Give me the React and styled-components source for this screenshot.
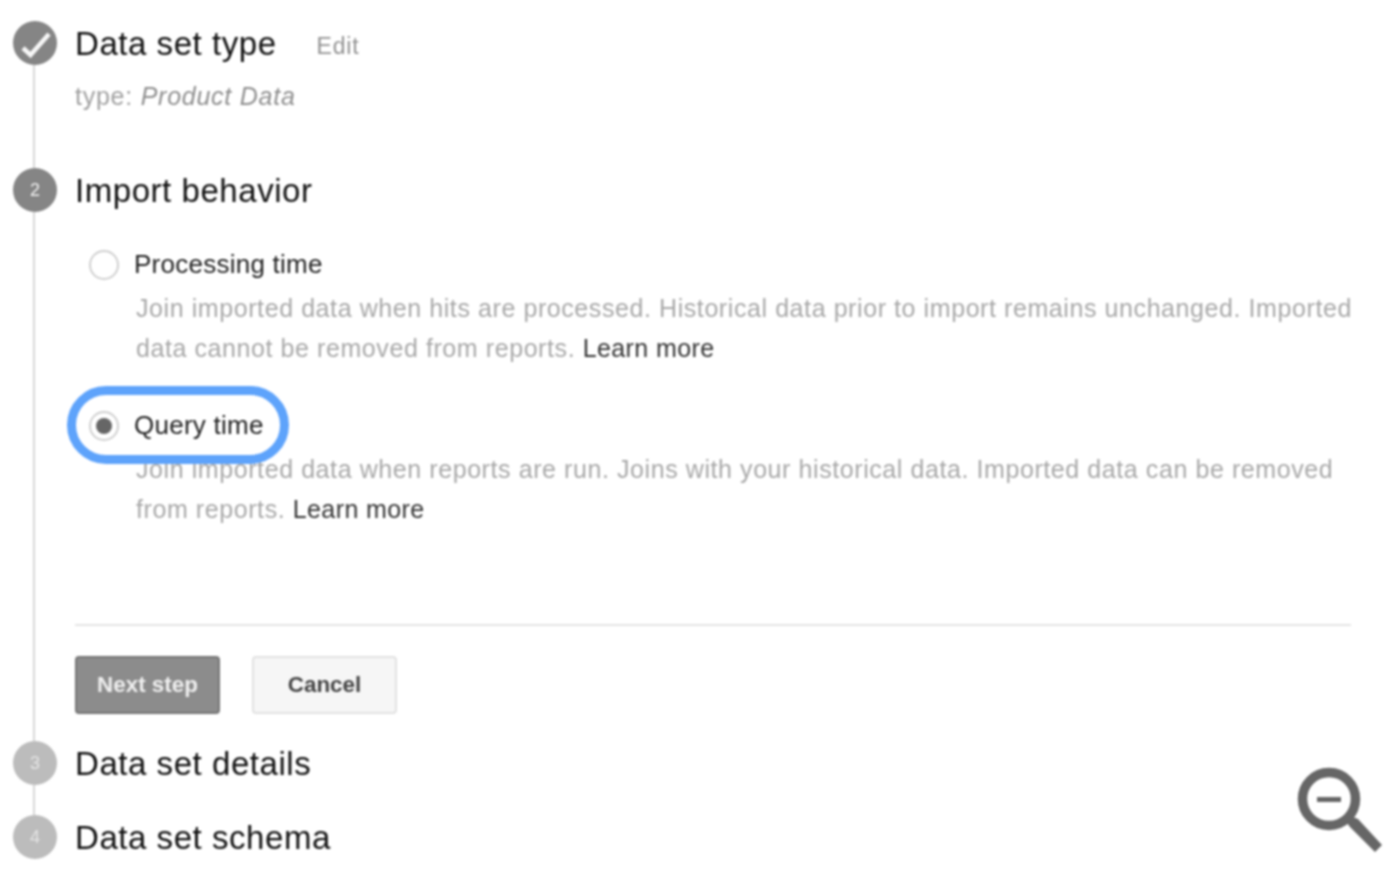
import React from 'react';
import styled, { createGlobalStyle } from 'styled-components';

const GlobalStyle = createGlobalStyle`
  html, body {
    margin: 0;
    background: #fff;
    font-family: "Liberation Sans", Arial, sans-serif;
  }
`;

const Page = styled.div`
  position: relative;
  width: 1392px;
  height: 874px;
  padding: 21px 41px 0 13px;
  box-sizing: border-box;
  overflow: hidden;
  filter: blur(0.8px);
`;

const Step = styled.section`
  display: flex;
  gap: 18px;
  min-height: ${p => p.$height}px;
`;

const Marker = styled.div`
  display: flex;
  flex-direction: column;
  align-items: center;
  width: 44px;
  flex: none;
`;

const Circle = styled.div`
  width: 44px;
  height: 44px;
  border-radius: 50%;
  flex: none;
  display: flex;
  align-items: center;
  justify-content: center;
  background: ${p => (p.$active ? '#858585' : '#bcbcbc')};
  color: ${p => (p.$active ? '#f2f2f2' : '#e4e4e4')};
  font-size: 18px;
`;

const Connector = styled.div`
  flex: 1;
  width: 2px;
  margin-right: 2px;
  background: #d8d8d8;
`;

const Body = styled.div`
  flex: 1;
  min-width: 0;
`;

const TitleRow = styled.div`
  display: flex;
  align-items: center;
  height: 44px;
`;

const Title = styled.h2`
  margin: 0;
  padding-top: 1px;
  font-size: 33px;
  font-weight: 400;
  letter-spacing: 0.55px;
  color: #111;
`;

const Edit = styled.a`
  margin: 7px 0 0 40px;
  font-size: 23px;
  letter-spacing: 0.8px;
  color: #919191;
`;

const Summary = styled.div`
  margin-top: 11px;
  font-size: 25px;
  line-height: 40px;
  letter-spacing: 0.75px;
  color: #a0a0a0;

  em {
    color: #8e8e8e;
  }
`;

const Option = styled.div`
  margin-top: ${p => p.$top}px;
`;

const OptionLabel = styled.label`
  position: relative;
  display: flex;
  align-items: center;
  gap: 15px;
  height: 40px;
  margin-left: 14px;
  font-size: 26px;
  letter-spacing: 0.25px;
  color: #222;
`;

const FocusRing = styled.span`
  position: absolute;
  left: -22px;
  top: -19px;
  width: 222px;
  height: 78px;
  box-sizing: border-box;
  border: 9px solid #5ea3fb;
  border-radius: 39px;
`;

const Radio = styled.span`
  width: 30px;
  height: 30px;
  margin-top: 1px;
  box-sizing: border-box;
  flex: none;
  display: flex;
  align-items: center;
  justify-content: center;
  border: 2px solid #d0d0d0;
  border-radius: 50%;
`;

const RadioDot = styled.span`
  width: 16px;
  height: 16px;
  border-radius: 50%;
  background: #666;
`;

const Description = styled.p`
  margin: 4px 0 0 61px;
  font-size: 25px;
  line-height: 40px;
  letter-spacing: 0.58px;
  white-space: nowrap;
  color: #a8a8a8;
`;

const LearnMore = styled.a`
  letter-spacing: 0.4px;
  color: #333;
`;

const Divider = styled.hr`
  margin: 95px 0 30px;
  height: 2px;
  border: 0;
  background: #e4e4e4;
`;

const Buttons = styled.div`
  display: flex;
  gap: 32px;
`;

const Button = styled.button`
  width: 145px;
  height: 58px;
  padding: 0;
  box-sizing: border-box;
  border-radius: 4px;
  font-family: inherit;
  font-size: 22.4px;
  font-weight: 700;
  border: 2px solid ${p => (p.$primary ? '#767676' : '#e2e2e2')};
  background: ${p => (p.$primary ? '#8c8c8c' : '#f6f6f6')};
  color: ${p => (p.$primary ? '#efefef' : '#444')};
`;

const ZoomOut = styled.svg`
  position: absolute;
  right: 0;
  bottom: 0;
`;

const CheckIcon = () => (
  <svg width="44" height="44" viewBox="0 0 44 44">
    <path d="M10 27l7.5 7L36 13" fill="none" stroke="#f7f7f7" strokeWidth="4.5" />
  </svg>
);

const App = () => (
  <>
    <GlobalStyle />
    <Page>
      <Step $height={147}>
        <Marker>
          <Circle $active><CheckIcon /></Circle>
          <Connector />
        </Marker>
        <Body>
          <TitleRow>
            <Title>Data set type</Title>
            <Edit>Edit</Edit>
          </TitleRow>
          <Summary>type: <em>Product Data</em></Summary>
        </Body>
      </Step>

      <Step $height={573}>
        <Marker>
          <Circle $active>2</Circle>
          <Connector />
        </Marker>
        <Body>
          <TitleRow>
            <Title>Import behavior</Title>
          </TitleRow>

          <Option $top={32}>
            <OptionLabel><Radio />Processing time</OptionLabel>
            <Description>
              Join imported data when hits are processed. Historical data prior to import remains unchanged. Imported<br />
              data cannot be removed from reports. <LearnMore>Learn more</LearnMore>
            </Description>
          </Option>

          <Option $top={37}>
            <OptionLabel>
              <FocusRing />
              <Radio><RadioDot /></Radio>Query time
            </OptionLabel>
            <Description>
              Join imported data when reports are run. Joins with your historical data. Imported data can be removed<br />
              from reports. <LearnMore>Learn more</LearnMore>
            </Description>
          </Option>

          <Divider />
          <Buttons>
            <Button $primary>Next step</Button>
            <Button>Cancel</Button>
          </Buttons>
        </Body>
      </Step>

      <Step $height={74}>
        <Marker>
          <Circle>3</Circle>
          <Connector />
        </Marker>
        <Body>
          <TitleRow>
            <Title>Data set details</Title>
          </TitleRow>
        </Body>
      </Step>

      <Step $height={44}>
        <Marker>
          <Circle>4</Circle>
        </Marker>
        <Body>
          <TitleRow>
            <Title>Data set schema</Title>
          </TitleRow>
        </Body>
      </Step>

      <ZoomOut width="112" height="124" viewBox="0 0 112 124">
        <circle cx="49" cy="49" r="26.5" fill="none" stroke="#666" strokeWidth="9.5" />
        <rect x="37" y="47" width="24" height="5" fill="#666" />
        <path d="M67 73l6-6 5 2 24 26-7 7-25-25z" fill="#666" />
      </ZoomOut>
    </Page>
  </>
);

export default App;
